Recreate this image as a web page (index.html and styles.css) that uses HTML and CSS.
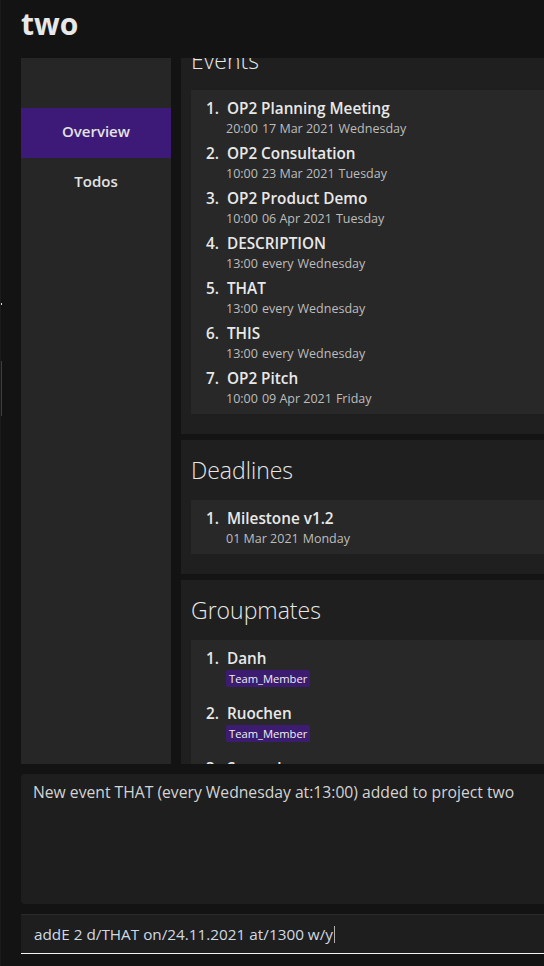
FILE: index.html
```html
<!DOCTYPE html>
<html lang="en">
<head>
<meta charset="utf-8">
<title>two</title>
<link rel="stylesheet" href="styles.css">
</head>
<body>
<div class="edge-mark edge-dot"></div>
<div class="edge-mark edge-purple"></div>
<div class="app">
  <header class="topbar"><h1 class="project-name">two</h1></header>
  <div class="workspace">
    <nav class="sidebar">
      <div class="tab active">Overview</div>
      <div class="tab">Todos</div>
    </nav>
    <main class="panel">
      <div class="panel-scroll">
        <section class="card">
          <h2 class="card-title">Events</h2>
          <ol class="list">
            <li class="item"><div class="item-title"><span class="num">1.</span><span>OP2 Planning Meeting</span></div><div class="item-sub"><span>20:00</span><span>17 Mar 2021</span><span>Wednesday</span></div></li>
            <li class="item"><div class="item-title"><span class="num">2.</span><span>OP2 Consultation</span></div><div class="item-sub"><span>10:00</span><span>23 Mar 2021</span><span>Tuesday</span></div></li>
            <li class="item"><div class="item-title"><span class="num">3.</span><span>OP2 Product Demo</span></div><div class="item-sub"><span>10:00</span><span>06 Apr 2021</span><span>Tuesday</span></div></li>
            <li class="item"><div class="item-title"><span class="num">4.</span><span>DESCRIPTION</span></div><div class="item-sub"><span>13:00</span><span>every</span><span>Wednesday</span></div></li>
            <li class="item"><div class="item-title"><span class="num">5.</span><span>THAT</span></div><div class="item-sub"><span>13:00</span><span>every</span><span>Wednesday</span></div></li>
            <li class="item"><div class="item-title"><span class="num">6.</span><span>THIS</span></div><div class="item-sub"><span>13:00</span><span>every</span><span>Wednesday</span></div></li>
            <li class="item"><div class="item-title"><span class="num">7.</span><span>OP2 Pitch</span></div><div class="item-sub"><span>10:00</span><span>09 Apr 2021</span><span>Friday</span></div></li>
          </ol>
        </section>
        <section class="card">
          <h2 class="card-title">Deadlines</h2>
          <ol class="list">
            <li class="item"><div class="item-title"><span class="num">1.</span><span>Milestone v1.2</span></div><div class="item-sub"><span>01 Mar 2021</span><span>Monday</span></div></li>
          </ol>
        </section>
        <section class="card">
          <h2 class="card-title">Groupmates</h2>
          <ol class="list">
            <li class="item person"><div class="item-title"><span class="num">1.</span><span>Danh</span></div><span class="tag">Team_Member</span></li>
            <li class="item person"><div class="item-title"><span class="num">2.</span><span>Ruochen</span></div><span class="tag">Team_Member</span></li>
            <li class="item person"><div class="item-title"><span class="num">3.</span><span>Samuel</span></div></li>
          </ol>
        </section>
      </div>
    </main>
  </div>
  <div class="result">New event THAT (every Wednesday at:13:00) added to project two</div>
  <div class="command"><span class="command-text">addE 2 d/THAT on/24.11.2021 at/1300 w/y</span><span class="caret"></span></div>
</div>
</body>
</html>
```
FILE: styles.css
```css
html, body {
  margin: 0;
  padding: 0;
}
body {
  position: relative;
  width: 544px;
  height: 966px;
  overflow: hidden;
  box-sizing: border-box;
  background: #131313;
  border-left: 1px solid #1b1b1b;
  font-family: "Open Sans", "Noto Sans", sans-serif;
  color: #e6e6e6;
}
.edge-mark {
  position: absolute;
  left: 0;
  width: 1px;
}
.edge-dot {
  top: 303px;
  height: 2px;
  background: #d8d8d8;
}
.edge-purple {
  top: 361px;
  height: 55px;
  background: #4b1fb0;
}
.app {
  display: flex;
  flex-direction: column;
  width: 620px;
  height: 966px;
  padding-left: 20px;
}
.topbar {
  height: 58px;
  box-sizing: border-box;
  padding-top: 9px;
  flex: none;
}
.project-name {
  margin: 0;
  font-size: 30px;
  line-height: 30px;
  font-weight: 700;
  color: #e8e8e8;
}
.workspace {
  display: flex;
  gap: 10px;
  height: 706px;
  flex: none;
}
.sidebar {
  width: 150px;
  flex: none;
  background: #262626;
  padding-top: 50px;
  box-sizing: border-box;
}
.tab {
  height: 50px;
  box-sizing: border-box;
  display: flex;
  align-items: center;
  justify-content: center;
  font-size: 15px;
  font-weight: 600;
  color: #e2e2e2;
}
.tab.active {
  background: #3e1a78;
  padding-bottom: 4px;
}
.tab + .tab {
  padding-bottom: 5px;
}
.panel {
  flex: 1;
  overflow: hidden;
  background: #141414;
}
.panel-scroll {
  margin-top: -28px;
  display: flex;
  flex-direction: column;
  gap: 6px;
}
.card {
  background: #1f1f1f;
  padding: 0 10px 20px;
}
.card-title {
  margin: 0;
  height: 60px;
  line-height: 60px;
  font-size: 23px;
  font-weight: 300;
  color: #e8e8e8;
}
.list {
  list-style: none;
  margin: 0;
  padding: 4px 0 5px;
  background: #282828;
}
.item {
  height: 45px;
  box-sizing: border-box;
  padding: 3px 15px 0;
}
.item-title {
  display: flex;
  gap: 8px;
  font-size: 15.3px;
  font-weight: 600;
  line-height: 22px;
  color: #e8e8e8;
}
.item-sub {
  display: flex;
  gap: 4px;
  padding-left: 20px;
  font-size: 12.5px;
  line-height: 19px;
  color: #bdbdbd;
}
.person {
  height: 55px;
  display: flex;
  flex-direction: column;
  align-items: flex-start;
}
.tag {
  margin: 1px 0 0 20px;
  padding: 0 3px;
  background: #3c1c70;
  color: #f0f0f0;
  font-size: 11.2px;
  line-height: 17px;
  border-radius: 2px;
}
.result {
  flex: none;
  margin-top: 10px;
  height: 130px;
  box-sizing: border-box;
  padding: 7px 12px;
  background: #1e1e1e;
  border-radius: 4px 0 0 4px;
  font-size: 15.7px;
  line-height: 22px;
  color: #d4d4d4;
}
.command {
  flex: none;
  margin-top: 10px;
  height: 40px;
  box-sizing: border-box;
  display: flex;
  align-items: center;
  padding-left: 13px;
  background: #1e1e1e;
  border-top: 1px solid #2a2a2a;
  border-bottom: 1px solid #f2f2f2;
  font-size: 15.3px;
  color: #cfdae6;
}
.caret {
  width: 0;
  height: 17px;
  margin-left: 1px;
  border-left: 1px solid #b0b0b0;
}
```
